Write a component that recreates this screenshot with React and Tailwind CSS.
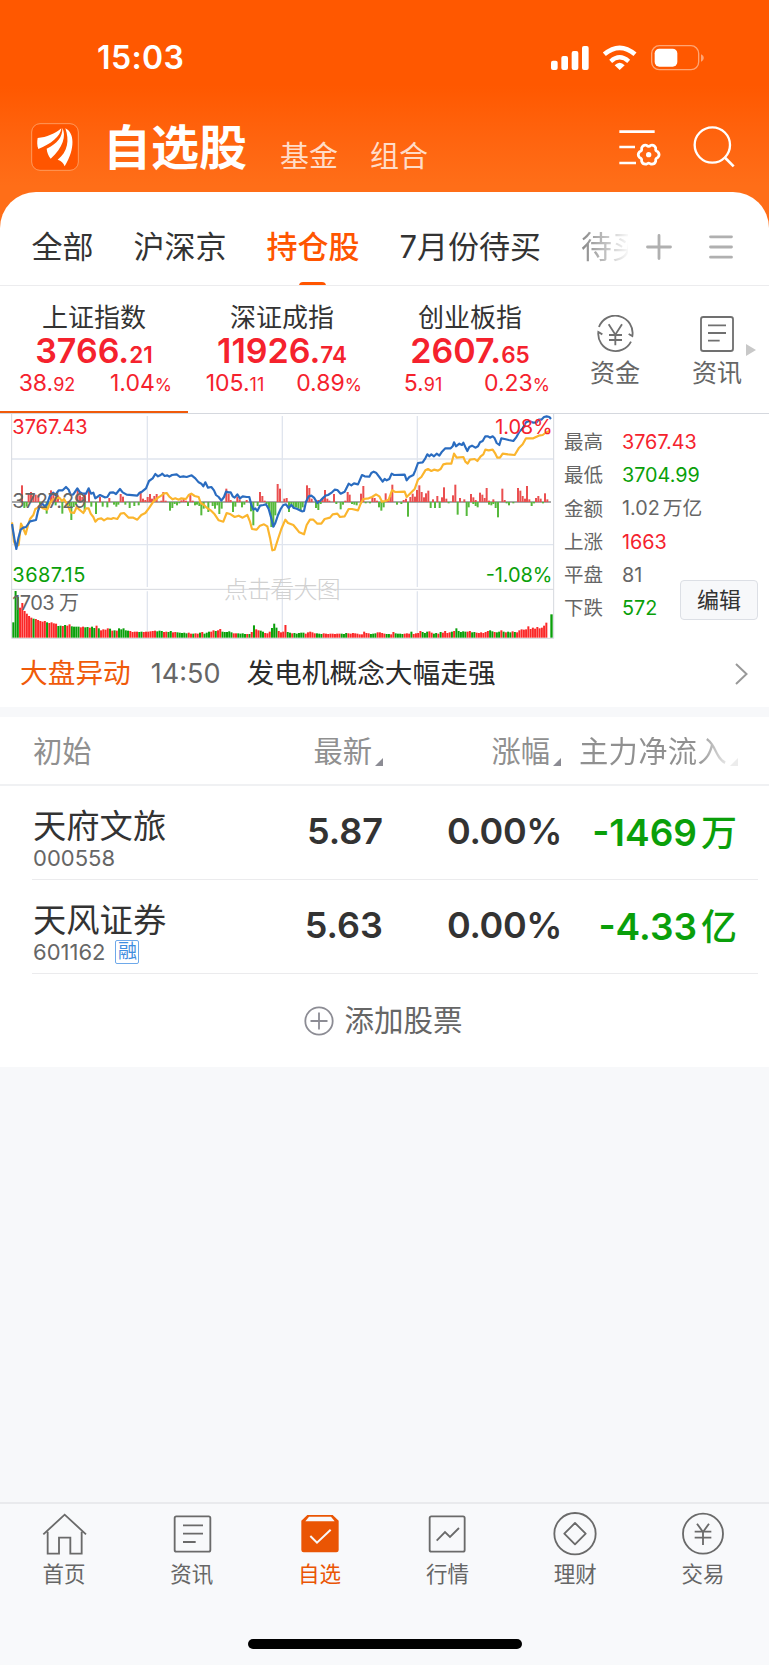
import React from 'react'

const indices = [
  { name: "上证指数", big: "3766.", small: "21", diff: "38.", diffSmall: "92", pct: "1.04", active: true },
  { name: "深证成指", big: "11926.", small: "74", diff: "105.", diffSmall: "11", pct: "0.89" },
  { name: "创业板指", big: "2607.", small: "65", diff: "5.", diffSmall: "91", pct: "0.23" },
];

const stats = [
  { label: "最高", value: "3767.43", color: "text-[#f5222d]" },
  { label: "最低", value: "3704.99", color: "text-[#0a9f0a]" },
  { label: "金额", value: "1.02", unit: "万亿", color: "text-[#666]" },
  { label: "上涨", value: "1663", color: "text-[#f5222d]" },
  { label: "平盘", value: "81", color: "text-[#666]" },
  { label: "下跌", value: "572", color: "text-[#0a9f0a]" },
];

const stocks = [
  { name: "天府文旅", code: "000558", price: "5.87", pct: "0.00%", flow: "-1469", unit: "万" },
  { name: "天风证券", code: "601162", tag: "融", price: "5.63", pct: "0.00%", flow: "-4.33", unit: "亿" },
];

const blueLine = "36,357 43,400 49,432 55,400 62,374 70,368 78,366 90,349 108,345 114,318 120,302 127,296 134,304 141,298 150,272 160,263 166,270 176,256 188,256 198,246 206,254 212,270 220,268 232,250 240,262 248,266 258,266 266,250 273,266 280,263 286,280 300,270 314,277 322,276 330,263 340,262 348,267 360,252 368,262 380,269 412,272 418,264 426,260 438,250 447,228 458,220 466,207 474,214 482,210 487,206 494,213 502,211 508,215 516,210 530,208 540,216 550,214 560,216 575,211 586,220 596,232 604,236 610,244 616,232 624,248 634,246 642,256 648,270 656,276 664,287 672,276 678,260 686,262 692,262 698,274 704,278 712,268 720,280 728,274 740,276 748,276 754,300 760,314 766,310 772,318 780,302 790,300 798,298 806,312 814,340 820,365 826,354 834,330 842,312 850,300 858,298 866,309 874,300 882,309 890,311 898,315 906,319 912,318 918,290 926,274 934,272 942,278 952,294 960,288 968,280 976,272 984,270 996,262 1004,254 1012,255 1022,266 1034,260 1046,236 1054,241 1062,235 1074,238 1080,224 1086,210 1094,214 1108,215 1114,204 1121,200 1128,203 1138,216 1148,230 1154,222 1160,226 1168,222 1175,206 1182,210 1214,209 1220,226 1228,216 1240,210 1246,196 1254,174 1268,172 1276,160 1282,148 1288,154 1294,148 1302,154 1310,146 1318,152 1326,140 1336,130 1352,130 1358,124 1362,112 1368,124 1378,116 1386,120 1390,113 1396,126 1402,138 1408,126 1416,122 1426,128 1434,124 1440,112 1448,108 1456,94 1464,94 1470,98 1478,94 1484,100 1490,114 1498,120 1504,100 1514,102 1526,105 1540,108 1548,98 1558,80 1568,70 1578,52 1588,48 1600,53 1610,52 1616,44 1624,44 1632,36 1640,34 1648,36 1653,42";

const yellowLine = "36,352 42,410 48,424 56,420 63,356 68,366 77,388 84,360 90,342 100,330 106,312 114,308 120,300 128,310 142,314 150,294 158,284 168,280 178,278 186,288 192,282 198,292 206,308 212,322 222,324 230,306 238,314 250,324 258,310 266,310 272,326 280,336 286,350 294,342 304,340 312,346 322,340 334,342 340,339 352,342 362,326 372,324 386,338 400,338 412,344 424,330 436,324 448,308 460,290 474,278 484,272 490,266 500,264 508,275 518,283 526,280 536,284 544,280 558,282 566,270 574,266 584,273 596,276 602,294 612,300 620,308 632,316 644,328 656,346 670,350 680,324 692,328 704,336 716,332 728,338 742,330 750,350 756,372 770,374 780,362 792,358 802,364 810,398 817,436 824,434 834,402 844,372 856,344 864,354 880,360 890,372 898,382 912,388 920,360 930,344 940,344 952,356 964,356 974,342 990,338 998,328 1012,326 1020,336 1034,334 1046,312 1056,312 1074,316 1082,296 1090,282 1106,280 1116,276 1128,268 1138,274 1146,290 1156,288 1166,284 1176,256 1186,261 1214,260 1220,276 1232,264 1244,252 1254,224 1264,216 1276,196 1284,192 1294,198 1302,194 1314,197 1322,192 1330,178 1340,176 1354,176 1362,146 1370,158 1390,156 1396,170 1403,176 1410,164 1424,162 1432,168 1442,154 1450,148 1456,134 1466,136 1478,134 1486,146 1492,158 1500,158 1508,146 1524,148 1544,150 1556,130 1568,118 1578,100 1600,100 1616,92 1628,90 1636,84 1648,78";

// [x, height], measured from the middle line
const upBars = [[66,50],[86,25],[93,30],[100,18],[107,22],[115,20],[153,35],[160,25],[167,10],[174,20],[233,40],[240,20],[247,15],[255,25],[267,40],[300,15],[328,12],[362,24],[369,16],[422,32],[429,10],[436,6],[443,15],[450,24],[456,10],[463,18],[470,24],[484,4],[490,30],[497,4],[544,5],[551,10],[558,4],[571,22],[578,4],[679,40],[686,25],[692,6],[712,16],[719,8],[740,6],[780,30],[787,18],[794,4],[833,54],[840,40],[853,10],[860,12],[921,50],[928,42],[935,10],[948,4],[955,6],[962,4],[968,12],[975,36],[982,10],[988,4],[1002,24],[1036,4],[1043,30],[1049,22],[1083,25],[1090,48],[1117,14],[1124,12],[1131,4],[1157,26],[1164,4],[1171,16],[1177,52],[1211,6],[1218,10],[1231,15],[1238,25],[1245,16],[1251,36],[1258,50],[1265,30],[1272,14],[1278,26],[1285,34],[1299,8],[1312,18],[1326,14],[1332,44],[1339,10],[1359,20],[1366,52],[1380,12],[1393,8],[1413,24],[1420,14],[1427,6],[1440,28],[1447,22],[1454,12],[1460,42],[1467,4],[1480,8],[1507,40],[1514,6],[1554,42],[1561,34],[1568,18],[1575,10],[1581,48],[1588,8],[1608,12],[1615,18],[1622,10],[1635,26],[1642,8]];
const downBars = [[73,18],[80,14],[120,18],[140,35],[147,10],[167,10],[187,35],[208,12],[214,54],[221,15],[228,8],[254,28],[274,14],[288,36],[308,14],[322,16],[342,8],[349,14],[355,8],[376,8],[389,18],[403,12],[416,10],[510,26],[517,18],[524,6],[531,10],[538,4],[564,12],[585,10],[591,8],[598,12],[604,40],[611,20],[625,30],[638,12],[645,20],[652,10],[658,36],[665,20],[699,30],[706,14],[726,16],[733,8],[753,28],[760,70],[773,12],[800,6],[807,20],[814,75],[820,75],[826,40],[867,30],[874,12],[881,20],[888,16],[895,20],[902,28],[908,16],[948,18],[955,24],[962,6],[1009,6],[1022,22],[1029,8],[1056,6],[1063,8],[1070,10],[1097,4],[1110,4],[1137,16],[1144,26],[1151,16],[1191,8],[1204,6],[1224,44],[1292,18],[1305,18],[1319,18],[1346,4],[1373,38],[1400,42],[1406,16],[1420,6],[1427,12],[1433,16],[1467,8],[1474,10],[1480,6],[1487,18],[1494,46],[1520,4],[1527,10],[1540,4],[1595,12],[1602,4],[1629,4]];

const volume = [
  46,140,122,90,104,80,72,65,60,57,
  56,53,50,48,50,46,44,46,43,42,
  35,36,35,38,36,40,34,33,33,33,
  31,33,31,32,30,33,29,36,28,22,
  25,24,28,27,21,22,21,28,25,28,
  22,21,20,17,18,18,17,18,17,18,
  18,19,20,21,19,21,20,17,18,17,
  20,16,17,16,15,14,15,13,15,12,
  12,13,12,15,17,12,15,18,18,22,
  20,22,26,18,17,17,19,16,13,13,
  13,12,13,11,11,11,17,37,25,22,
  21,18,14,13,18,29,42,30,20,16,
  18,38,17,15,13,14,12,14,15,15,
  12,16,18,16,13,13,12,11,13,12,
  11,12,12,11,12,12,12,11,14,13,
  12,14,13,12,10,10,18,14,13,11,
  12,13,16,16,14,12,11,11,10,17,
  13,12,12,11,12,13,12,18,11,13,
  14,20,17,14,18,19,15,12,14,12,
  17,15,20,14,16,18,20,28,20,17,
  19,18,18,20,16,17,15,14,16,14,
  17,20,22,19,17,16,18,22,18,16,
  18,16,19,17,16,22,25,24,25,34,
  26,30,27,32,28,30,36,45,
];
const volumeColors = "gggrrrrrrgrrrrrgrrrrggrgrrggggrrggrggrgrrrrgrgrgggggrrrrggrrrrrrgggrrggrrgggggrrgrrgrgggrrgrrgggggrrggggrgrgrrggrrrgggrrrrggrgggggrrrrrgggrrrrrrrrgggrrrrrrrrrrgggrrrrggrrggggrrrgrrrrgggrrggrgrrrrgrgggggrrggrrrrrrggrggrgrggrgrrrrrrrrrrrrrrr";

function StatusBar() {
  return (
    <div className="flex h-[115px] items-center justify-between pl-[97px] pr-[63px] text-white">
      <span className="text-[32px] font-semibold leading-none tracking-[0.4px]">15:03</span>
      <svg className="h-[27px] w-[156px]" viewBox="498 130 468 81" fill="#fff">
        <rect x="501" y="180" width="20" height="28" rx="6" />
        <rect x="532" y="166" width="20" height="42" rx="6" />
        <rect x="563" y="151" width="20" height="57" rx="6" />
        <rect x="594" y="136" width="20" height="72" rx="6" />
        <path d="M661 161Q707 122 753 161" fill="none" stroke="#fff" strokeWidth="14" />
        <path d="M680 182Q707 158 734 182" fill="none" stroke="#fff" strokeWidth="13" />
        <path d="M707 208L692 194Q707 178 722 194Z" />
        <rect x="803" y="135" width="141" height="72" rx="23" fill="none" stroke="#ffa573" strokeWidth="4" />
        <rect x="812" y="144" width="68" height="54" rx="14" />
        <path d="M951 161C962 165 962 179 951 183Z" fill="#ffa573" />
      </svg>
    </div>
  );
}

// six-lobed outline of the gear
const gear = Array.from({ length: 6 }, (_, i) => {
  const p = (deg, r) => {
    const a = ((deg + i * 60) * Math.PI) / 180;
    return `${(794 + r * Math.cos(a)).toFixed(1)} ${(463 + r * Math.sin(a)).toFixed(1)}`;
  };
  return `${i === 0 ? "M" : "L"}${p(-17, 29)}Q${p(0, 35)} ${p(17, 29)}Q${p(30, 22)} ${p(43, 29)}`;
}).join("") + "Z";

function Header() {
  return (
    <div className="flex h-[77px] items-start pl-[31px] pr-[34px] text-white">
      <svg className="mt-2 h-12 w-12" viewBox="93 368 144 144">
        <rect x="95" y="370" width="140" height="140" rx="25" fill="#ff5500" stroke="#ff9a5c" strokeWidth="3" />
        <g fill="#fff">
          <path d="M113 413C140 411 165 400 184 384C182 408 152 432 115 446C111 436 111 424 113 413Z" />
          <path d="M187 383C199 405 190 442 152 475C145 466 141 456 140 445C172 430 188 410 187 383Z" />
          <path d="M196 384C223 396 227 445 194 498C190 488 184 481 173 478C203 455 209 420 196 384Z" />
        </g>
      </svg>
      <h1 className="ml-[24px] mt-[8px] w-[144px] whitespace-nowrap text-[48px] font-semibold leading-[50px]">自选股</h1>
      <span className="ml-[33px] mt-[26px] text-[29px] leading-[32px] text-[#ffdcc8]">基金</span>
      <span className="ml-[32px] mt-[26px] text-[29px] leading-[32px] text-[#ffdcc8]">组合</span>
      <svg className="ml-auto mt-[8px] h-[48px] w-[117px]" viewBox="702 368 351 144" fill="none" stroke="#fff">
        <path d="M706 394H812M706 440H753M706 488H756" strokeWidth="8" />
        <path d={gear} strokeWidth="8" strokeLinejoin="round" />
        <circle cx="794" cy="463" r="8" fill="#fff" stroke="none" />
        <circle cx="985" cy="434" r="53" strokeWidth="7" />
        <path d="M1021 470L1049 498" strokeWidth="8" />
      </svg>
    </div>
  );
}

function Tabs() {
  return (
    <div className="flex h-[94px] items-center rounded-t-[36px] bg-white text-[31px] leading-none text-[#333]">
      <div className="flex h-full w-[628px] items-center gap-10 overflow-hidden whitespace-nowrap border-b border-[#ececee] pl-[31.4px] pt-[16px]">
        <span>全部</span>
        <span>沪深京</span>
        <span className="relative flex h-full items-center font-medium text-[#ff5500]">
          持仓股
          <i className="absolute bottom-[-1px] left-[33px] h-1 w-[27px] rounded-t-sm bg-[#ff5500]" />
        </span>
        <span>7月份待买</span>
        <span className="bg-linear-to-r from-[#888] to-white to-80% bg-clip-text text-transparent">待买</span>
      </div>
      <div className="flex h-full flex-1 items-center border-b border-[#ececee] pl-[18px] pt-[16px]">
        <svg className="h-[26px] w-[26px]" viewBox="0 0 26 26" stroke="#b0b0b0" strokeWidth="2.8" strokeLinecap="round">
          <path d="M13 1.5V24.5M1.5 13H24.5" />
        </svg>
        <svg className="ml-[37px] h-[24px] w-[24px]" viewBox="0 0 24 24" stroke="#b0b0b0" strokeWidth="2.8" strokeLinecap="round">
          <path d="M1.5 1.8H22.5M1.5 12H22.5M1.5 22.2H22.5" />
        </svg>
      </div>
    </div>
  );
}

function Indices() {
  return (
    <div className="flex h-[127px] text-[#f5222d]">
      {indices.map((item) => (
        <div key={item.name} className={`flex w-[188px] flex-col items-center pt-[18px] ${item.active ? "border-b-2 border-[#f05a0a]" : ""}`}>
          <div className="text-[26px] leading-[28px] text-[#333]">{item.name}</div>
          <div className="mt-[2px] flex h-[35px] items-baseline font-semibold leading-[34px]">
            <span className="text-[34px]">{item.big}</span>
            <span className="text-[22.5px]">{item.small}</span>
          </div>
          <div className="flex w-full text-[23px] leading-[29px]">
            <div className="flex-1 text-center">{item.diff}<span className="text-[18px]">{item.diffSmall}</span></div>
            <div className="flex-1 text-center">{item.pct}<span className="text-[17.5px]">%</span></div>
          </div>
        </div>
      ))}
      <div className="flex flex-1 items-start pt-[29px] text-[25px] leading-[28px] text-[#666]">
        <div className="flex w-[102px] flex-col items-center gap-[6px]">
          <svg className="h-[38px] w-[38px]" viewBox="636 373 114 114" fill="none" stroke="#707070" strokeWidth="5.5">
            <path d="M645 409A52 52 0 0 1 745 436L734 430M741 453A52 52 0 0 1 643 424L655 431" />
            <path d="M674 401L694 432L714 401M694 432V464M675 433H714M675 448H714" />
          </svg>
          <span>资金</span>
        </div>
        <div className="relative flex w-[102px] flex-col items-center gap-[6px]">
          <svg className="h-[38px] w-[38px]" viewBox="943 373 114 114" fill="none" stroke="#707070" strokeWidth="5.5">
            <rect x="952" y="379" width="96" height="102" rx="7" />
            <path d="M973 404H1027M973 427H1027M973 450H1008" />
          </svg>
          <span>资讯</span>
          <svg className="absolute right-[12px] top-[29px] h-3 w-[10px]" viewBox="0 0 10 12">
            <path d="M0 0L10 6L0 12Z" fill="#c8c8c8" />
          </svg>
        </div>
      </div>
    </div>
  );
}

function Chart() {
  return (
    <svg className="ml-[11px] h-[225px] w-[544px]" viewBox="33 27 1632 675">
      <g fill="none" stroke="#e0e5ee" strokeWidth="4">
        <path d="M36 162H1660M36 419H1660" />
        <path d="M442 33V546M847 33V546M1252 33V546M442 559V698M847 559V698M1252 559V698" />
      </g>
      <path d="M35 24V700H1661V24M35 553H1661" fill="none" stroke="#d5d8de" strokeWidth="3" />
      <path d="M36 291H1653" stroke="#8c8c8c" strokeWidth="4" />
      {upBars.map(([x, h]) => <rect key={x} x={x - 3} y={291 - h} width="6" height={h} fill="#ea4f50" />)}
      {downBars.map(([x, h]) => <rect key={x} x={x - 3} y="291" width="6" height={h} fill="#56b93c" />)}
      {volume.map((h, i) => (
        <rect key={i} x={37 + i * 6.747} y={698 - h} width="6" height={h} fill={volumeColors[i] === "g" ? "#0a9f0a" : "#fb2828"} />
      ))}
      <rect x="1651" y="628" width="7" height="70" fill="#0a9f0a" />
      <polyline points={yellowLine} fill="none" stroke="#fbb52d" strokeWidth="6.5" strokeLinejoin="round" />
      <polyline points={blueLine} fill="none" stroke="#2a6cc0" strokeWidth="6.5" strokeLinejoin="round" />
      <g className="font-['Inter','Noto_Sans_CJK_SC',sans-serif]" fontSize="60">
        <text x="672" y="578" fontSize="72" fill="#d0d0d0" fontWeight="300" textLength="350">点击看大图</text>
        <text x="37" y="88" fill="#f5222d" textLength="226">3767.43</text>
        <text x="37" y="309" fill="#666" textLength="222">3727.29</text>
        <text x="37" y="532" fill="#0a9f0a" textLength="219">3687.15</text>
        <text x="37" y="616" fill="#666" textLength="200">1703 万</text>
        <text x="1486" y="88" fill="#f5222d" textLength="172">1.08%</text>
        <text x="1457" y="532" fill="#0a9f0a" textLength="200">-1.08%</text>
      </g>
    </svg>
  );
}

function ChartPanel() {
  return (
    <div className="flex h-[227px] border-t border-[#d5d8de]">
      <Chart />
      <div className="flex flex-1 justify-between pl-[9px] pr-[11px] text-[19.5px] text-[#666]">
        <div className="pt-[12.4px]">
          {stats.map((s) => (
            <div key={s.label} className="flex h-[33.2px] items-center gap-[19px] whitespace-nowrap leading-none">
              <span>{s.label}</span>
              <span className={s.color + " text-[19.8px]"}>
                {s.value}
                {s.unit && <span className="ml-[3px]">{s.unit}</span>}
              </span>
            </div>
          ))}
        </div>
        <button className="-ml-8 mt-[166px] h-10 w-[78px] rounded border border-[#dcdfe5] bg-[#f7f8fa] text-[22px] leading-none text-[#333]">编辑</button>
      </div>
    </div>
  );
}

function SortMark({ color }) {
  return (
    <svg className="mb-px ml-[3px] h-2 w-2" viewBox="0 0 8 8">
      <path d="M8 0V8H0Z" fill={color} />
    </svg>
  );
}

function Watchlist() {
  return (
    <div className="bg-white">
      <div className="flex h-[69px] items-center border-b-2 border-[#f0f1f3] pl-[33px] pt-[3px] text-[29.3px] leading-none text-[#909090]">
        <span className="w-[160px]">初始</span>
        <div className="flex w-[190px] items-end justify-end">最新<SortMark color="#8c8c94" /></div>
        <div className="flex w-[178px] items-end justify-end">涨幅<SortMark color="#8c8c94" /></div>
        <div className="flex flex-1 items-end pl-[18px]">
          <span className="bg-linear-to-r from-[#909090] from-80% to-[#e8e8e8] bg-clip-text tracking-[0.3px] text-transparent">主力净流入</span>
          <SortMark color="#ececec" />
        </div>
      </div>
      {stocks.map((s) => (
        <div key={s.code} className="ml-8 mr-[11px] flex h-[94px] items-center border-b border-[#ebebed] text-[36px] leading-none text-[#333]">
          <div className="w-[170px] pl-px pt-[12px]">
            <div className="text-[33.3px] leading-[38px]">{s.name}</div>
            <div className="flex h-[26px] items-center text-[22px] text-[#666]">
              {s.code}
              {s.tag && <span className="ml-[10px] flex h-6 w-6 items-center justify-center rounded-xs border border-[#6ea9ea] text-[19px] text-[#3f8ee0]">{s.tag}</span>}
            </div>
          </div>
          <span className="w-[181px] pb-[4px] text-right font-semibold">{s.price}</span>
          <span className="w-[179px] pb-[4px] text-right font-semibold tracking-[-0.4px]">{s.pct}</span>
          <span className="flex flex-1 items-baseline justify-end gap-[4px] pr-[21px] font-semibold text-[#0a9f0a]">
            <span className="text-[37px]">{s.flow}</span>
            <span className="font-medium">{s.unit}</span>
          </span>
        </div>
      ))}
      <div className="flex h-[93px] items-center justify-center gap-[10px] pr-[2px] text-[29.5px] leading-none text-[#666]">
        <svg className="h-[30px] w-[30px]" viewBox="0 0 30 30" fill="none" stroke="#8c8c94" strokeWidth="1.8">
          <circle cx="15" cy="15" r="13.7" />
          <path d="M15 6.5V23.5M6.5 15H23.5" />
        </svg>
        添加股票
      </div>
    </div>
  );
}

const navItems = [
  {
    label: "首页",
    icon: <path d="M5 68L69 9L133 68M18 60V126H52V78H86V126H120V60" transform="translate(-1 -1)" />,
  },
  {
    label: "资讯",
    icon: <><rect x="14" y="13" width="107" height="106" rx="5" /><path d="M39 40H99M39 65H99M39 90H77" /></>,
  },
  {
    label: "自选",
    active: true,
    icon: (
      <g stroke="none">
        <path d="M28 9H104L122 26V114Q122 121 115 121H17Q10 121 10 114V26Z" fill="#ea5504" />
        <path d="M33 14H99L110 28H22Z" fill="#f8f9fb" />
        <path d="M37 72L57 92L98 53" fill="none" stroke="#f8f9fb" strokeWidth="6" />
      </g>
    ),
  },
  {
    label: "行情",
    icon: <><rect x="14" y="13" width="105" height="106" rx="5" /><path d="M35 86L60 60L75 75L102 48" /></>,
  },
  {
    label: "理财",
    icon: <><circle cx="66" cy="65" r="62" /><path d="M66 33L98 65L66 97L34 65Z" strokeLinejoin="round" /></>,
  },
  {
    label: "交易",
    icon: <><circle cx="66" cy="65" r="60" /><path d="M48 35L66 60L84 35M66 60V99M41 59H91M41 77H91" /></>,
  },
];

function BottomNav() {
  return (
    <div className="flex h-[163px] flex-col items-center border-t-2 border-[#e9eaed] bg-[#f8f9fb]">
      <div className="flex h-[135px] w-full pr-[2px]">
        {navItems.map((n) => (
          <div key={n.label} className={`flex flex-1 flex-col items-center pt-[7px] text-[21.5px] leading-none ${n.active ? "text-[#ea5504]" : "text-[#666]"}`}>
            <svg className="h-[46px] w-[46px]" viewBox="-3 -3 138 138" fill="none" stroke="#6a6a6a" strokeWidth="5.5">{n.icon}</svg>
            <span className="mt-[7px]">{n.label}</span>
          </div>
        ))}
      </div>
      <div className="h-[10px] w-[274px] rounded-full bg-black" />
    </div>
  );
}

function App() {
  return (
    <div className="flex h-[1665px] w-[769px] flex-col bg-[#f7f8fa] font-['Inter','Noto_Sans_CJK_SC',sans-serif]">
      <div className="bg-linear-to-b from-[#ff5800] from-30% to-[#ff6e18] to-65%">
        <StatusBar />
        <Header />
        <Tabs />
      </div>
      <div className="bg-white">
        <Indices />
        <ChartPanel />
        <div className="flex h-[67px] items-center pl-5 pr-[21px] text-[27.7px] leading-none text-[#2b2b2b]">
          <span className="text-[#f05a0a]">大盘异动</span>
          <span className="ml-5 text-[27px] text-[#666]">14:50</span>
          <span className="ml-[26px]">发电机概念大幅走强</span>
          <svg className="ml-auto h-[22px] w-[13px]" viewBox="0 0 13 22" fill="none" stroke="#999" strokeWidth="2">
            <path d="M1 1L11.5 11L1 21" />
          </svg>
        </div>
      </div>
      <div className="h-[10px]" />
      <Watchlist />
      <div className="flex-1" />
      <BottomNav />
    </div>
  );
}

export default App
